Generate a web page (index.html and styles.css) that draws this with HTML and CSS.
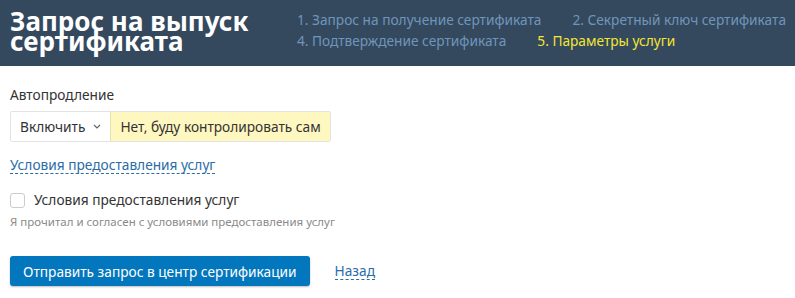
FILE: index.html
```html
<!DOCTYPE html>
<html lang="ru">
<head>
  <meta charset="utf-8">
  <title>Запрос на выпуск сертификата</title>
  <link rel="stylesheet" href="styles.css">
</head>
<body>
  <header class="top">
    <h1>Запрос на выпуск сертификата</h1>
    <ol class="steps">
      <li>1. Запрос на получение сертификата</li>
      <li>2. Секретный ключ сертификата</li>
      <li>4. Подтверждение сертификата</li>
      <li class="current">5. Параметры услуги</li>
    </ol>
  </header>

  <main class="form">
    <div class="field">
      <label class="label">Автопродление</label>
      <div class="switch">
        <span class="opt">Включить
          <svg width="8" height="5" viewBox="0 0 8 5"><path d="M1 1l3 3 3-3" fill="none" stroke="#666" stroke-width="1.2"/></svg>
        </span>
        <span class="opt note">Нет, буду контролировать сам</span>
      </div>
    </div>

    <a class="dash" href="#">Условия предоставления услуг</a>

    <label class="check">
      <span class="box"></span>
      Условия предоставления услуг
    </label>
    <p class="hint">Я прочитал и согласен с условиями предоставления услуг</p>

    <div class="actions">
      <button class="btn">Отправить запрос в центр сертификации</button>
      <a class="dash" href="#">Назад</a>
    </div>
  </main>
</body>
</html>
```

FILE: styles.css
```css
:root {
  --dark: #34495e;
  --step: #7095ba;
  --link: #2b6ca8;
  --blue: #0277bd;
  --text: #333;
}
* { box-sizing: border-box; margin: 0; padding: 0; }
body {
  font-family: 'Noto Sans', 'Open Sans', sans-serif;
  font-size: 13.7px;
  color: var(--text);
  background: #fff;
}
/* header */
.top {
  background: var(--dark);
  height: 66px;
  display: flex;
  padding: 10px 0 0 10px;
}
.top h1 {
  width: 287px;
  flex-shrink: 0;
  color: #fff;
  font-size: 26px;
  font-weight: 700;
  line-height: 20px;
  padding-top: 1px;
}
.steps {
  list-style: none;
  display: flex;
  flex-wrap: wrap;
  column-gap: 31px;
  row-gap: 3px;
  align-content: flex-start;
  flex: 1;
  padding-top: 1px;
}
.steps li {
  color: var(--step);
  line-height: 18px;
  white-space: nowrap;
}
.steps li.current { color: #f4e634; }
/* form */
.form {
  padding: 20px 10px;
  display: flex;
  flex-direction: column;
  align-items: flex-start;
}
.label {
  display: block;
  line-height: 18px;
  margin-bottom: 7px;
}
.switch {
  display: flex;
  border: 1px solid #e3e3e3;
  border-radius: 2px;
  height: 31px;
}
.opt {
  display: flex;
  align-items: center;
  gap: 8px;
  padding: 0 9px;
  background: #fff;
}
.opt.note {
  background: #fff7c0;
  border-left: 1px solid #e6e2b0;
}
.dash {
  color: var(--link);
  text-decoration: none;
  border-bottom: 1px dashed var(--link);
  line-height: 16px;
}
.form > .dash { margin-top: 15px; }
.check {
  display: flex;
  align-items: center;
  gap: 9px;
  margin-top: 17px;
  line-height: 18px;
}
.box {
  width: 15px;
  height: 15px;
  border: 1px solid #ccc;
  border-radius: 3px;
}
.hint {
  font-size: 11.5px;
  color: #8a8a8a;
  margin-top: 5px;
}
.actions {
  display: flex;
  align-items: center;
  gap: 25px;
  margin-top: 27px;
}
.btn {
  font-family: inherit;
  font-size: 13.7px;
  color: #fff;
  background: var(--blue);
  border: none;
  border-radius: 3px;
  height: 30px;
  padding: 0 13px;
  box-shadow: 0 1px 2px rgba(0,0,0,.25);
}
```
